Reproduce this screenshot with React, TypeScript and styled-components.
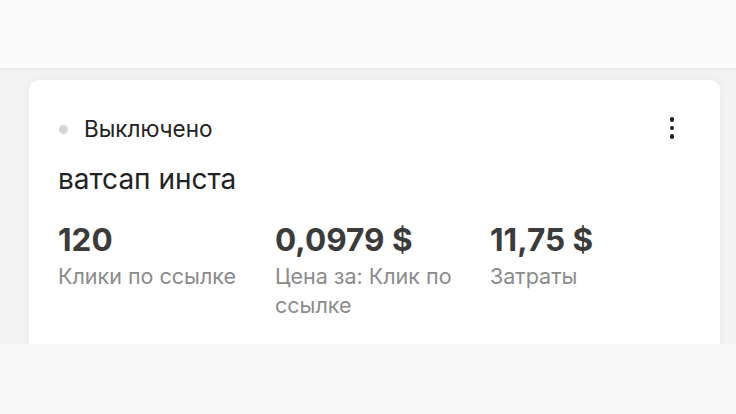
import React from "react";
import styled, { createGlobalStyle } from "styled-components";

const Global = createGlobalStyle`
  html, body { margin: 0; padding: 0; }
  body {
    width: 736px;
    height: 414px;
    overflow: hidden;
    background: #f3f3f3;
    font-family: Inter, Roboto, "Noto Sans", sans-serif;
    color: #1e1e1e;
  }
`;

const Page = styled.div`
  display: flex;
  flex-direction: column;
  width: 736px;
  height: 414px;
`;

const TopBar = styled.div`
  height: 68px;
  background: #fafafa;
  box-shadow: 0 2px 4px rgba(0, 0, 0, 0.04);
  flex-shrink: 0;
`;

const Content = styled.div`
  flex: 1;
  padding: 12px 16px 0 29px;
  overflow: hidden;
  display: flex;
  flex-direction: column;
`;

const Card = styled.div`
  width: 691px;
  background: #ffffff;
  border-radius: 10px 10px 0 0;
  box-shadow: 0 0 8px rgba(0, 0, 0, 0.05);
  padding: 30px 29px 40px 29px;
  box-sizing: border-box;
  flex: 1;
  display: flex;
  flex-direction: column;
`;

const Header = styled.div`
  display: flex;
  align-items: center;
  justify-content: space-between;
  height: 36px;
`;

const Status = styled.div`
  display: flex;
  align-items: center;
  gap: 16px;
  font-size: 22.5px;
  color: #222;
  padding-left: 1px;
`;

const Dot = styled.span`
  width: 9px;
  height: 9px;
  border-radius: 50%;
  background: #d6d6d6;
  margin-top: 2px;
`;

const Menu = styled.button`
  border: none;
  background: none;
  padding: 0;
  margin-right: 17px;
  display: flex;
  flex-direction: column;
  gap: 4px;
  cursor: pointer;
`;

const MenuDot = styled.span`
  width: 4.5px;
  height: 4.5px;
  border-radius: 50%;
  background: #222;
`;

const Title = styled.div`
  font-size: 28px;
  color: #222;
  margin-top: 18px;
  line-height: 30px;
`;

const Stats = styled.div`
  display: grid;
  grid-template-columns: 217px 215px 200px;
  margin-top: 28px;
`;

const Stat = styled.div`
  display: flex;
  flex-direction: column;
`;

const Value = styled.div`
  font-size: 31.5px;
  font-weight: 700;
  color: #3b3b3b;
  line-height: 36px;
`;

const Label = styled.div`
  font-size: 21.5px;
  color: #8b8b8b;
  line-height: 29px;
  margin-top: 4px;
  max-width: 200px;
`;

const BottomBar = styled.div`
  height: 70px;
  background: #f8f8f8;
  flex-shrink: 0;
`;

const stats = [
  { value: "120", label: "Клики по ссылке" },
  { value: "0,0979 $", label: "Цена за: Клик по ссылке" },
  { value: "11,75 $", label: "Затраты" },
];

export default function App() {
  return (
    <>
      <Global />
      <Page>
        <TopBar />
        <Content>
          <Card>
            <Header>
              <Status>
                <Dot />
                Выключено
              </Status>
              <Menu aria-label="menu">
                <MenuDot />
                <MenuDot />
                <MenuDot />
              </Menu>
            </Header>
            <Title>ватсап инста</Title>
            <Stats>
              {stats.map((s) => (
                <Stat key={s.value}>
                  <Value>{s.value}</Value>
                  <Label>{s.label}</Label>
                </Stat>
              ))}
            </Stats>
          </Card>
        </Content>
        <BottomBar />
      </Page>
    </>
  );
}
